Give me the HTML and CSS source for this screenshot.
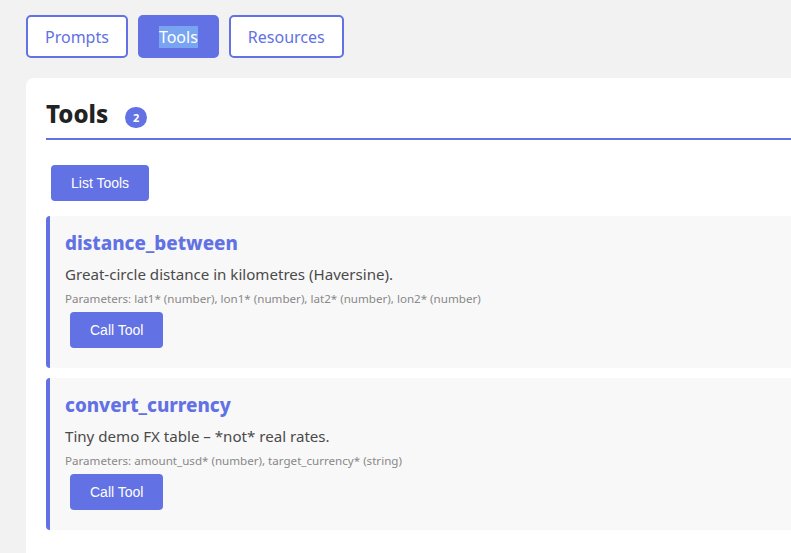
FILE: index.html
```html
<!DOCTYPE html>
<html>
<head>
<meta charset="utf-8">
<link rel="stylesheet" href="styles.css">
</head>
<body>
<div class="tabs">
  <button class="tab">Prompts</button>
  <button class="tab active"><span class="sel">Tools</span></button>
  <button class="tab">Resources</button>
</div>
<section class="panel">
  <div class="panel-header">
    <h2 class="panel-title">Tools</h2>
    <span class="badge">2</span>
  </div>
  <button class="btn list-btn">List Tools</button>
  <div class="tool">
    <h3 class="tool-name">distance_between</h3>
    <p class="tool-desc">Great-circle distance in kilometres (Haversine).</p>
    <p class="tool-params">Parameters: lat1* (number), lon1* (number), lat2* (number), lon2* (number)</p>
    <button class="btn">Call Tool</button>
  </div>
  <div class="tool">
    <h3 class="tool-name">convert_currency</h3>
    <p class="tool-desc">Tiny demo FX table – *not* real rates.</p>
    <p class="tool-params">Parameters: amount_usd* (number), target_currency* (string)</p>
    <button class="btn">Call Tool</button>
  </div>
</section>
</body>
</html>
```
FILE: styles.css
```css
html {
  overflow: hidden;
}
body {
  margin: 0;
  padding: 15px 0 0 26px;
  background: #f2f2f2;
  font-family: "Noto Sans", "Open Sans", sans-serif;
  width: 1100px;
}
.tabs {
  display: flex;
  gap: 10px;
  margin-bottom: 20px;
}
.tab {
  height: 43px;
  padding: 0 17px;
  border: 2px solid #6271e3;
  border-radius: 5px;
  background: #fff;
  color: #6271e3;
  font-family: "Noto Sans", sans-serif;
  font-size: 16px;
}
.tab.active {
  background: #6271e3;
  color: #fff;
  padding: 0 19px;
}
.sel {
  background: #78a4f2;
}
.panel {
  background: #fff;
  border-radius: 8px;
  padding: 20px 19px;
  width: 1000px;
}
.panel-header {
  display: flex;
  align-items: center;
  gap: 17px;
  border-bottom: 2px solid #6271e3;
  padding: 0 0 8px 0;
  margin-left: 1px;
}
.panel-title {
  margin: 0;
  font-size: 24px;
  font-weight: 800;
  color: #222;
  line-height: 32px;
}
.badge {
  background: #6271e3;
  color: #fff;
  font-size: 11px;
  font-weight: 700;
  width: 22px;
  height: 21px;
  border-radius: 11px;
  display: flex;
  align-items: center;
  justify-content: center;
  margin-top: 7px;
}
.btn {
  display: block;
  background: #6271e3;
  color: #fff;
  border: none;
  border-radius: 4px;
  height: 36px;
  padding: 0 20px;
  font-family: "Liberation Sans", Arial, sans-serif;
  font-size: 14px;
  margin: 5px;
}
.list-btn {
  margin-top: 25px;
  margin-left: 6px;
  margin-bottom: 15px;
}
.tool {
  background: #f8f8f8;
  border-left: 4px solid #6271e3;
  border-radius: 4px;
  padding: 15px;
  margin: 0 0 10px 1px;
}
.tool-name {
  margin: 0 0 8px 0;
  font-size: 18.8px;
  font-weight: 800;
  color: #6271e3;
  line-height: 24px;
}
.tool-desc {
  margin: 0 0 6px 0;
  font-size: 15.1px;
  color: #4a4a4a;
  line-height: 22px;
}
.tool-params {
  margin: 0;
  font-size: 11.6px;
  color: #888;
  line-height: 16px;
}
```
